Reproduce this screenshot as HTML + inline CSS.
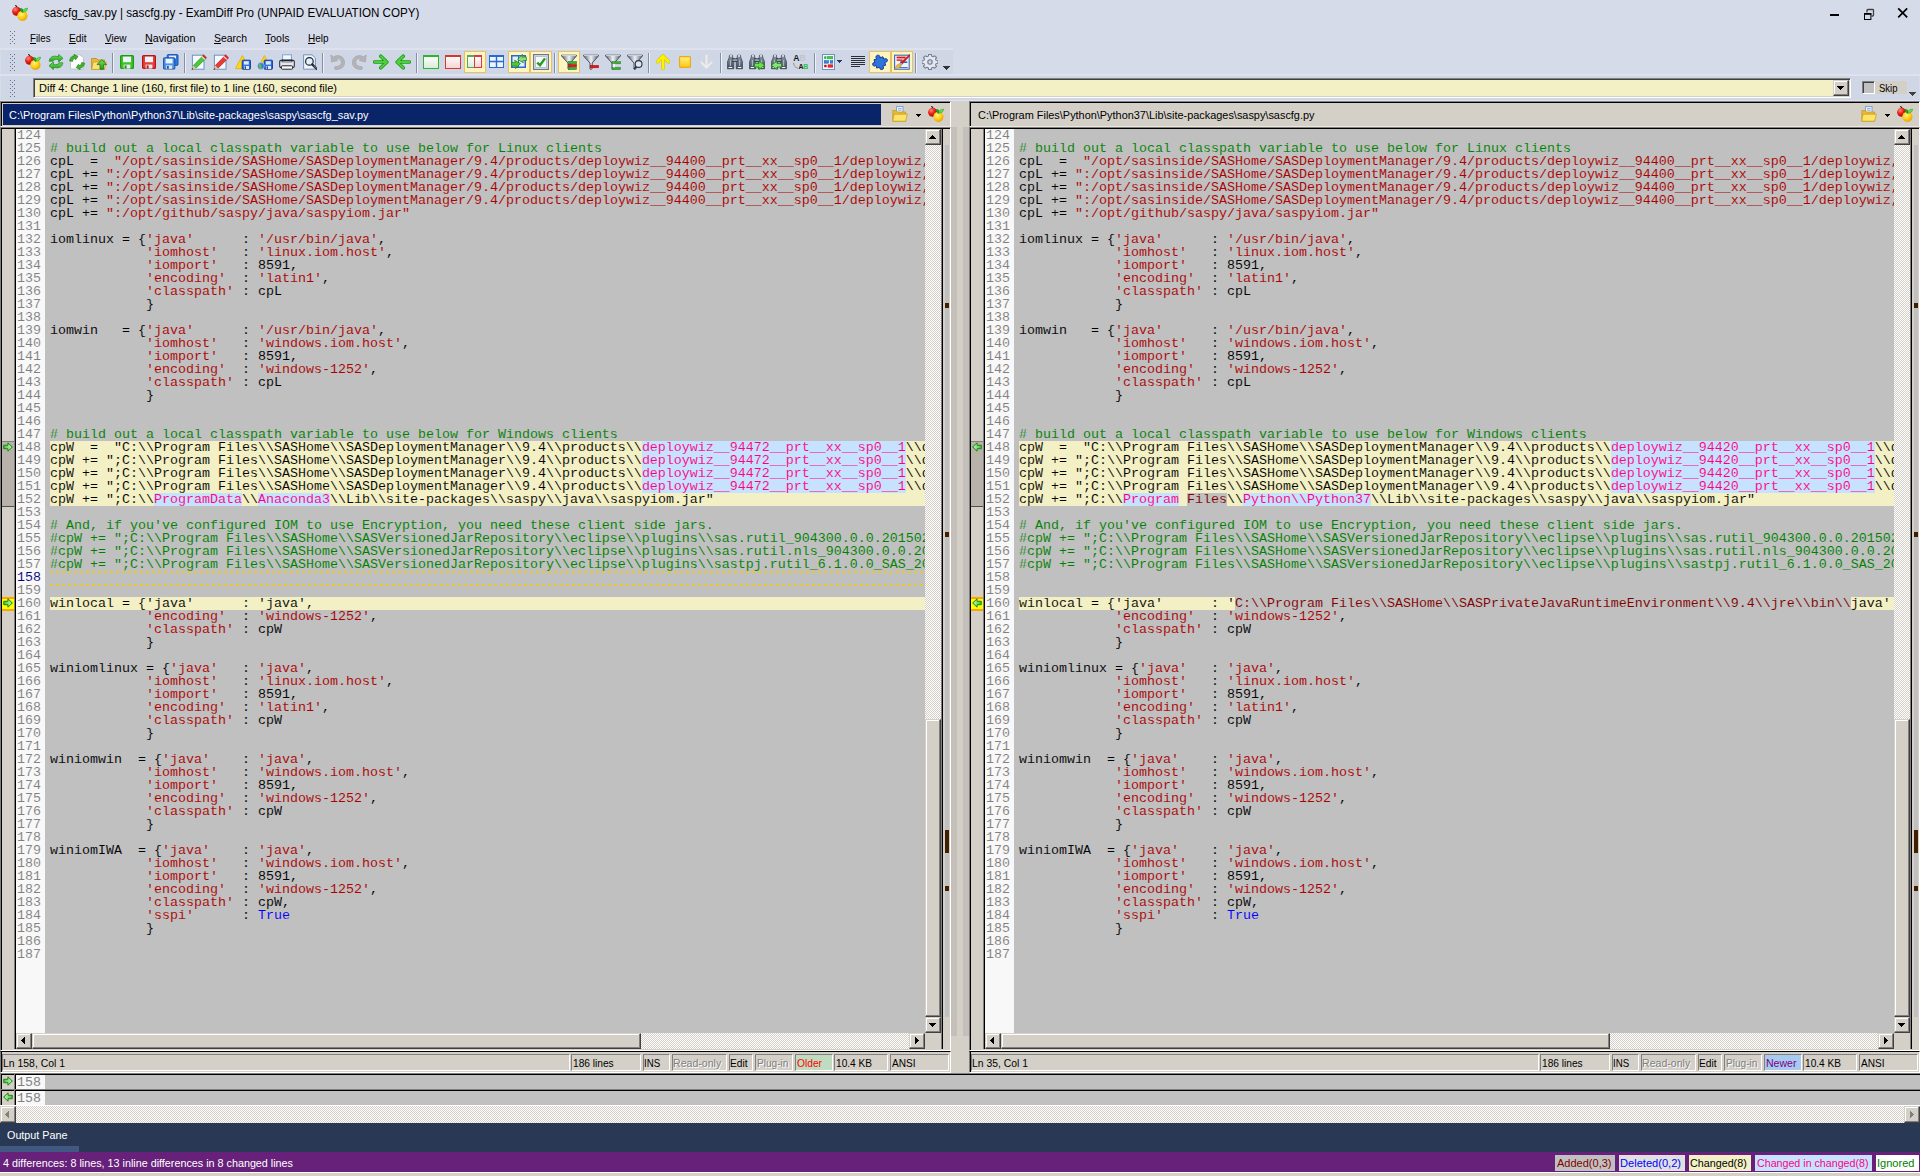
<!DOCTYPE html><html><head><meta charset="utf-8"><title>ExamDiff Pro</title><style>
*{box-sizing:border-box;margin:0;padding:0}
html,body{width:1920px;height:1176px;overflow:hidden;background:#d6dbe9}
body{position:relative;font-family:"Liberation Sans",sans-serif;font-size:11px;color:#000}
.a{position:absolute}
.ui{font-family:"Liberation Sans",sans-serif;font-size:11.5px;white-space:pre;line-height:14px;letter-spacing:-0.15px}
.mono{font-family:"Liberation Mono",monospace;font-size:13.33px;line-height:13px;white-space:pre;-webkit-text-stroke:0.08px #c0c0c0}
.ch{-webkit-text-stroke-color:#f2efc4}.c{-webkit-text-stroke-color:#c6e2ff}.ad{-webkit-text-stroke-color:#c0c0c0}.ln{-webkit-text-stroke-color:#f8f8f8}
.k{background:#000}
.face{background:#d4d0c8}
.btn{background:#d4d0c8;border:1px solid;border-color:#d4d0c8 #404040 #404040 #d4d0c8;box-shadow:inset -1px -1px 0 #808080, inset 1px 1px 0 #fff}
.chk{background-color:#e9e7e3;background-image:conic-gradient(#fff 25%,#d4d0c8 0 50%,#fff 0 75%,#d4d0c8 0);background-size:2px 2px}
.sunk{border:1px solid;border-color:#808080 #fff #fff #808080}
.cell{position:absolute;top:1054px;height:17px;border:1px solid;border-color:#808080 #fff #fff #808080;padding-left:1px;line-height:13px}
.ln{position:absolute;left:0;width:29px;height:13px;color:#808080;letter-spacing:0}
.row{position:absolute;left:0;height:13px;width:2000px}
.cm{color:#008000}.st{color:#aa0000}.kw{color:#0000ff}
.c,.ad{display:inline-block;height:13px;line-height:13px;vertical-align:top}
.c{color:#ff0080;background:#c6e2ff}
.ad{color:#800000;background:#c0c0c0}
.ch{background:#f3f0c5}
u{text-decoration:underline;text-underline-offset:1px}
.sep{position:absolute;top:53px;width:1px;height:20px;background:#8591a2;box-shadow:1px 0 0 #eef1f7}
.hl{position:absolute;top:51px;width:22px;height:22px;background:#fdf4bf;border:1px solid #e5c365}
.grip{position:absolute;width:5px;background-image:radial-gradient(#8c96a8 0.8px,transparent 1px);background-size:4px 4px}
</style></head><body>
<svg width="0" height="0" style="position:absolute"><defs><radialGradient id="gr" cx="35%" cy="30%" r="75%"><stop offset="0" stop-color="#ff8a70"/><stop offset=".5" stop-color="#e8201a"/><stop offset="1" stop-color="#a00808"/></radialGradient><radialGradient id="gy" cx="40%" cy="35%" r="70%"><stop offset="0" stop-color="#fff08a"/><stop offset=".5" stop-color="#ffd21a"/><stop offset="1" stop-color="#e89a00"/></radialGradient><linearGradient id="gg" x1="0" y1="0" x2="0" y2="1"><stop offset="0" stop-color="#7adf5a"/><stop offset="1" stop-color="#1e9e1e"/></linearGradient><linearGradient id="gfn" x1="0" y1="0" x2="1" y2="0"><stop offset="0" stop-color="#5a6473"/><stop offset=".5" stop-color="#eef1f5"/><stop offset="1" stop-color="#5a6473"/></linearGradient><linearGradient id="gw" x1="0" y1="0" x2="0" y2="1"><stop offset="0" stop-color="#ffffff"/><stop offset="1" stop-color="#d8ecd8"/></linearGradient><linearGradient id="gwr" x1="0" y1="0" x2="0" y2="1"><stop offset="0" stop-color="#ffffff"/><stop offset="1" stop-color="#f6d2d2"/></linearGradient><linearGradient id="gb" x1="0" y1="0" x2="0" y2="1"><stop offset="0" stop-color="#8f9db0"/><stop offset="1" stop-color="#3d4756"/></linearGradient><linearGradient id="gyl" x1="0" y1="0" x2="0" y2="1"><stop offset="0" stop-color="#fff27a"/><stop offset="1" stop-color="#fbc814"/></linearGradient><linearGradient id="gar" x1="0" y1="0" x2="1" y2="0"><stop offset="0" stop-color="#3cc02c"/><stop offset=".75" stop-color="#a8eea0"/><stop offset="1" stop-color="#58d048"/></linearGradient><linearGradient id="gal" x1="1" y1="0" x2="0" y2="0"><stop offset="0" stop-color="#3cc02c"/><stop offset=".75" stop-color="#a8eea0"/><stop offset="1" stop-color="#58d048"/></linearGradient></defs></svg>
<div class="a" style="left:12px;top:5px;line-height:0"><svg width="16" height="16" viewBox="0 0 16 16"><path d="M3.2 0.5 C4.2 0.6 4.8 1.4 5.3 2.6" stroke="#201000" stroke-width="1.1" fill="none"/><circle cx="4.6" cy="6.2" r="4.5" fill="url(#gr)"/><circle cx="10.4" cy="10.8" r="5.1" fill="url(#gy)"/><path d="M8.2 3.6 C9.6 3 10.8 3.8 11.2 5.2 C11.4 6.2 11 7 10.6 7.4 C9 7 8 5.6 8.2 3.6 Z" fill="#25a81f" stroke="#157a12" stroke-width=".5"/><path d="M10.8 7.2 C10.6 5 12.4 3.2 15.6 3.2 C15.4 5.6 13.6 7.2 10.8 7.2 Z" fill="#62e044" stroke="#1f9a18" stroke-width=".5"/></svg></div>
<div class="a ui" style="left:43.8px;top:6px;font-size:12px;letter-spacing:0;color:#000;transform:scaleX(0.9689);transform-origin:0 0;">sascfg_sav.py | sascfg.py - ExamDiff Pro (UNPAID EVALUATION COPY)</div>
<div class="a " style="left:1830px;top:14px;width:9px;height:2px;background:#000"></div>
<svg class="a" style="left:1863px;top:8px" width="12" height="13" viewBox="0 0 12 13"><path d="M4 4.5 L4 2.2 Q4 1.5 4.8 1.5 L9.7 1.5 Q10.5 1.5 10.5 2.3 L10.5 7.2 Q10.5 8 9.7 8 L8.5 8" fill="none" stroke="#404040" stroke-width="1.3"/><rect x="1.5" y="6" width="6.4" height="5.5" fill="none" stroke="#000" stroke-width="1"/><rect x="1" y="5" width="7.4" height="1.6" fill="#000"/></svg>
<svg class="a" style="left:1897px;top:7px" width="12" height="12" viewBox="0 0 12 12"><path d="M1.2 1.4 L10.2 10.4 M10.2 1.4 L1.2 10.4" stroke="#000" stroke-width="1.7"/></svg>
<svg class="a" style="left:10px;top:31px" width="5" height="14" fill="#5f6f8c" shape-rendering="crispEdges"><rect x="0" y="0" width="1" height="1"/><rect x="4" y="0" width="1" height="1"/><rect x="2" y="2" width="1" height="1"/><rect x="0" y="4" width="1" height="1"/><rect x="4" y="4" width="1" height="1"/><rect x="2" y="6" width="1" height="1"/><rect x="0" y="8" width="1" height="1"/><rect x="4" y="8" width="1" height="1"/><rect x="2" y="10" width="1" height="1"/><rect x="0" y="12" width="1" height="1"/><rect x="4" y="12" width="1" height="1"/></svg>
<div class="a ui" style="left:30px;top:31px;font-size:11px;letter-spacing:0;color:#000;transform:scaleX(0.8827);transform-origin:0 0;"><u>F</u>iles</div>
<div class="a ui" style="left:69px;top:31px;font-size:11px;letter-spacing:0;color:#000;transform:scaleX(0.9232);transform-origin:0 0;"><u>E</u>dit</div>
<div class="a ui" style="left:105px;top:31px;font-size:11px;letter-spacing:0;color:#000;transform:scaleX(0.9093);transform-origin:0 0;"><u>V</u>iew</div>
<div class="a ui" style="left:145px;top:31px;font-size:11px;letter-spacing:0;color:#000;transform:scaleX(0.9716);transform-origin:0 0;"><u>N</u>avigation</div>
<div class="a ui" style="left:214px;top:31px;font-size:11px;letter-spacing:0;color:#000;transform:scaleX(0.9468);transform-origin:0 0;"><u>S</u>earch</div>
<div class="a ui" style="left:265px;top:31px;font-size:11px;letter-spacing:0;color:#000;transform:scaleX(0.9541);transform-origin:0 0;"><u>T</u>ools</div>
<div class="a ui" style="left:308px;top:31px;font-size:11px;letter-spacing:0;color:#000;transform:scaleX(0.9061);transform-origin:0 0;"><u>H</u>elp</div>
<div class="a " style="left:1px;top:50px;width:952px;height:24px;background:#cfd6e5"></div>
<div class="a " style="left:0px;top:48px;width:953px;height:2px;background:#dde2ee"></div>
<div class="a " style="left:0px;top:74px;width:1920px;height:2px;background:#dde2ee"></div>
<div class="a " style="left:0px;top:100px;width:1920px;height:1px;background:#dde2ee"></div>
<svg class="a" style="left:10px;top:54px" width="5" height="18" fill="#5f6f8c" shape-rendering="crispEdges"><rect x="0" y="0" width="1" height="1"/><rect x="4" y="0" width="1" height="1"/><rect x="2" y="2" width="1" height="1"/><rect x="0" y="4" width="1" height="1"/><rect x="4" y="4" width="1" height="1"/><rect x="2" y="6" width="1" height="1"/><rect x="0" y="8" width="1" height="1"/><rect x="4" y="8" width="1" height="1"/><rect x="2" y="10" width="1" height="1"/><rect x="0" y="12" width="1" height="1"/><rect x="4" y="12" width="1" height="1"/><rect x="2" y="14" width="1" height="1"/><rect x="0" y="16" width="1" height="1"/><rect x="4" y="16" width="1" height="1"/></svg>
<div class="hl" style="left:464px"></div>
<div class="hl" style="left:508px"></div>
<div class="hl" style="left:530px"></div>
<div class="hl" style="left:558px"></div>
<div class="hl" style="left:869px"></div>
<div class="hl" style="left:891px"></div>
<div class="sep" style="left:112px"></div>
<div class="sep" style="left:184px"></div>
<div class="sep" style="left:322px"></div>
<div class="sep" style="left:416px"></div>
<div class="sep" style="left:554px"></div>
<div class="sep" style="left:648px"></div>
<div class="sep" style="left:720px"></div>
<div class="sep" style="left:814px"></div>
<div class="sep" style="left:915px"></div>
<div class="a" style="left:25px;top:54px;line-height:0"><svg width="16" height="16" viewBox="0 0 16 16"><path d="M3.2 0.5 C4.2 0.6 4.8 1.4 5.3 2.6" stroke="#201000" stroke-width="1.1" fill="none"/><circle cx="4.6" cy="6.2" r="4.5" fill="url(#gr)"/><circle cx="10.4" cy="10.8" r="5.1" fill="url(#gy)"/><path d="M8.2 3.6 C9.6 3 10.8 3.8 11.2 5.2 C11.4 6.2 11 7 10.6 7.4 C9 7 8 5.6 8.2 3.6 Z" fill="#25a81f" stroke="#157a12" stroke-width=".5"/><path d="M10.8 7.2 C10.6 5 12.4 3.2 15.6 3.2 C15.4 5.6 13.6 7.2 10.8 7.2 Z" fill="#62e044" stroke="#1f9a18" stroke-width=".5"/></svg></div>
<div class="a" style="left:48px;top:54px;line-height:0"><svg width="16" height="16" viewBox="0 0 16 16"><path d="M1.2 7.2 C1.5 3.2 5 1.6 8.4 2.3 L10.6 2.6 L10.6 0.4 L15 4.3 L10.6 8 L10.6 5.6 C7.6 5 5.4 5.6 5 7.2 Z" fill="url(#gg)" stroke="#1a8a1a" stroke-width=".7"/><path d="M14.8 8.8 C14.5 12.8 11 14.4 7.6 13.7 L5.4 13.4 L5.4 15.6 L1 11.7 L5.4 8 L5.4 10.4 C8.4 11 10.6 10.4 11 8.8 Z" fill="url(#gg)" stroke="#1a8a1a" stroke-width=".7"/></svg></div>
<div class="a" style="left:69px;top:54px;line-height:0"><svg width="16" height="16" viewBox="0 0 16 16"><path d="M1.5 2.5 L10.5 0.8 L14.5 3.6 L14.5 15 L1.5 15 Z" fill="#fdfdfd" stroke="#b8bcc4" stroke-width=".8"/><path d="M0.6 7 C0.8 3.8 3 2 5.6 1.6 L5 0.2 L9 2.6 L6.6 5.8 L6.2 4.2 C4.6 4.6 3.6 5.6 3.6 7.4 Z" fill="#3fb52a" stroke="#1a7a1a" stroke-width=".6"/><path d="M15.6 9 C15.4 12.2 13.2 14 10.6 14.4 L11.2 15.8 L7.2 13.4 L9.6 10.2 L10 11.8 C11.6 11.4 12.6 10.4 12.6 8.6 Z" fill="#3fb52a" stroke="#1a7a1a" stroke-width=".6"/></svg></div>
<div class="a" style="left:91px;top:54px;line-height:0"><svg width="16" height="16" viewBox="0 0 16 16"><path d="M0.6 4.5 L5.5 4.5 L6.8 6 L13.5 6 L13.5 15.4 L0.6 15.4 Z" fill="#e9b93a" stroke="#b98a14" stroke-width=".8"/><path d="M2.2 8 L15.4 8 L13.4 15.4 L0.6 15.4 Z" fill="#fbe07a" stroke="#c79a1c" stroke-width=".7"/><path d="M10.8 5.6 L15.6 10.6 L12.6 10.6 L12.6 15.2 L9 15.2 L9 10.6 L6 10.6 Z" fill="url(#gg)" stroke="#1a7a1a" stroke-width=".8"/></svg></div>
<div class="a" style="left:120px;top:55px;line-height:0"><svg width="14" height="14" viewBox="0 0 14 14"><rect x=".6" y=".6" width="12.8" height="12.8" rx="1" fill="#3ec32a" stroke="#1f9a14" stroke-width="1.2"/><rect x="3" y="1.6" width="8" height="5.6" fill="#eef4fb"/><rect x="3.6" y="9.6" width="6.8" height="4" fill="#e8e8ee"/><rect x="4.6" y="10.4" width="2" height="3.2" fill="#1f9a14"/></svg></div>
<div class="a" style="left:142px;top:55px;line-height:0"><svg width="14" height="14" viewBox="0 0 14 14"><rect x=".6" y=".6" width="12.8" height="12.8" rx="1" fill="#e3403c" stroke="#b81414" stroke-width="1.2"/><rect x="3" y="1.6" width="8" height="5.6" fill="#eef4fb"/><rect x="3.6" y="9.6" width="6.8" height="4" fill="#e8e8ee"/><rect x="4.6" y="10.4" width="2" height="3.2" fill="#c81414"/></svg></div>
<div class="a" style="left:163px;top:54px;line-height:0"><svg width="16" height="16" viewBox="0 0 16 16"><rect x="4.2" y=".6" width="10.8" height="10.8" rx="1" fill="#2f78d6" stroke="#1b57b0" stroke-width="1"/><rect x="6" y="1.6" width="7" height="3" fill="#e6f0fb"/><rect x=".6" y="3.8" width="11.2" height="11.2" rx="1" fill="#4a93ea" stroke="#1b57b0" stroke-width="1.1"/><rect x="2.6" y="4.8" width="7" height="4.6" fill="#eef4fb"/><rect x="3.2" y="11.4" width="6" height="3.4" fill="#e8e8ee"/><rect x="4" y="12" width="1.8" height="2.8" fill="#1b57b0"/></svg></div>
<div class="a" style="left:191px;top:54px;line-height:0"><svg width="16" height="16" viewBox="0 0 16 16"><rect x="1.4" y="1.2" width="11.6" height="14" fill="#f7fafe" stroke="#6f92c4" stroke-width="1"/><path d="M12.4 1.2 L15.4 4 L5 14.2 L2.2 11.6 Z" fill="#4ac83a" stroke="#1f8a14" stroke-width=".6"/><path d="M12.6 0.4 L15.8 3.4 L14.4 4.8 L11.2 1.8 Z" fill="#e82222"/><path d="M11 2 L14.2 5 L13.4 5.8 L10.2 2.8 Z" fill="#e8e8e8"/><path d="M2.2 11.6 L5 14.2 L0.6 15.8 Z" fill="#e8c08a"/><path d="M0.5 15.9 L1.3 13.9 L2.4 15.1 Z" fill="#222"/></svg></div>
<div class="a" style="left:213px;top:54px;line-height:0"><svg width="16" height="16" viewBox="0 0 16 16"><rect x="1.4" y="1.2" width="11.6" height="14" fill="#f7fafe" stroke="#6f92c4" stroke-width="1"/><path d="M12.4 1.2 L15.4 4 L5 14.2 L2.2 11.6 Z" fill="#ea3a34" stroke="#a81010" stroke-width=".6"/><path d="M12.6 0.4 L15.8 3.4 L14.4 4.8 L11.2 1.8 Z" fill="#e82222"/><path d="M11 2 L14.2 5 L13.4 5.8 L10.2 2.8 Z" fill="#e8e8e8"/><path d="M2.2 11.6 L5 14.2 L0.6 15.8 Z" fill="#e8c08a"/><path d="M0.5 15.9 L1.3 13.9 L2.4 15.1 Z" fill="#222"/></svg></div>
<div class="a" style="left:235px;top:54px;line-height:0"><svg width="16" height="16" viewBox="0 0 16 16"><path d="M7.4 1.6 L14.6 14.6 L0.4 14.6 Z" fill="#fbd728" stroke="#e0b000" stroke-width=".8"/><rect x="7.2" y="6.2" width="8.2" height="9" rx=".6" fill="#2f6fe0" stroke="#103c9a" stroke-width="1"/><rect x="8.8" y="7.2" width="5" height="3.4" fill="#d8e8fa"/><rect x="9" y="12" width="5" height="3" fill="#e8e8ee"/><rect x="9.6" y="12.4" width="1.4" height="2.4" fill="#103c9a"/></svg></div>
<div class="a" style="left:257px;top:54px;line-height:0"><svg width="16" height="16" viewBox="0 0 16 16"><path d="M7.4 1.6 L13.6 13.6 L1.4 13.6 Z" fill="#fbd728" stroke="#e0b000" stroke-width=".8"/><rect x="7.2" y="6.2" width="8.2" height="9" rx=".6" fill="#2f6fe0" stroke="#103c9a" stroke-width="1"/><rect x="8.8" y="7.2" width="5" height="3.4" fill="#d8e8fa"/><rect x="9" y="12" width="5" height="3" fill="#e8e8ee"/><rect x="9.6" y="12.4" width="1.4" height="2.4" fill="#103c9a"/><circle cx="4" cy="12" r="3.4" fill="#3a78d8" stroke="#c8d4e8" stroke-width=".6"/><path d="M2 10.4 C3.4 9.6 5 10.6 4.2 12 C3.6 13 5.6 13.4 4.8 14.8 C3 14.8 1.6 13 2 10.4Z" fill="#5ac83a"/></svg></div>
<div class="a" style="left:279px;top:54px;line-height:0"><svg width="16" height="16" viewBox="0 0 16 16"><rect x="3.6" y=".8" width="8.8" height="6" fill="#f2f7fd" stroke="#7a9ccc" stroke-width=".9"/><rect x=".7" y="6.4" width="14.6" height="7" rx="1.2" fill="#e4e8ef" stroke="#2a3240" stroke-width="1.1"/><rect x="2.6" y="5.6" width="10.8" height="2.6" fill="#20242c"/><rect x="3.4" y="7" width="9.2" height="1.4" fill="#9aa0aa"/><rect x="2.4" y="11.8" width="11.2" height="3.4" rx=".8" fill="#fdfdfd" stroke="#20242c" stroke-width="1"/></svg></div>
<div class="a" style="left:302px;top:54px;line-height:0"><svg width="15" height="16" viewBox="0 0 15 16"><path d="M1.6 .8 L10 .8 L13.4 4 L13.4 15.2 L1.6 15.2 Z" fill="#eef4fb" stroke="#6f92c4" stroke-width="1"/><circle cx="7.4" cy="7.4" r="3.8" fill="#e2eefb" fill-opacity=".8" stroke="#20242c" stroke-width="1.2"/><path d="M10.2 10.4 L14.8 15" stroke="#20242c" stroke-width="2.2" stroke-linecap="round"/><path d="M11.4 11.6 L14.4 14.6" stroke="#8a94a4" stroke-width=".8"/></svg></div>
<div class="a" style="left:330px;top:54px;line-height:0"><svg width="16" height="16" viewBox="0 0 16 16"><path d="M0.8 1 L1.6 8 L8 6.4 L5.8 4.8 C8.4 3.6 11.4 5.4 11.2 8.6 C11 11.4 8.6 12.6 5.6 12.6 C4 12.6 4 15.4 5.8 15.4 C10.8 15.6 14.6 13 14.6 8.4 C14.6 2.8 8.4 -0.4 3.6 3 Z" fill="#b4b4b6" stroke="#a2a2a6" stroke-width=".6"/></svg></div>
<div class="a" style="left:351px;top:54px;line-height:0"><svg width="16" height="16" viewBox="0 0 16 16"><path d="M15.2 1 L14.4 8 L8 6.4 L10.2 4.8 C7.6 3.6 4.6 5.4 4.8 8.6 C5 11.4 7.4 12.6 10.4 12.6 C12 12.6 12 15.4 10.2 15.4 C5.2 15.6 1.4 13 1.4 8.4 C1.4 2.8 7.6 -0.4 12.4 3 Z" fill="#b4b4b6" stroke="#a2a2a6" stroke-width=".6"/></svg></div>
<div class="a" style="left:373px;top:54px;line-height:0"><svg width="16" height="16" viewBox="0 0 16 16"><path d="M1.6 8 L13.6 8 M7.8 2.2 L13.8 8 L7.8 13.8" fill="none" stroke="#1a9a14" stroke-width="3.6" stroke-linecap="round" stroke-linejoin="round"/><path d="M1.6 8 L13.6 8 M7.8 2.2 L13.8 8 L7.8 13.8" fill="none" stroke="#4ed03c" stroke-width="2" stroke-linecap="round" stroke-linejoin="round"/></svg></div>
<div class="a" style="left:395px;top:54px;line-height:0"><svg width="16" height="16" viewBox="0 0 16 16"><path d="M14.4 8 L2.4 8 M8.2 2.2 L2.2 8 L8.2 13.8" fill="none" stroke="#1a9a14" stroke-width="3.6" stroke-linecap="round" stroke-linejoin="round"/><path d="M14.4 8 L2.4 8 M8.2 2.2 L2.2 8 L8.2 13.8" fill="none" stroke="#4ed03c" stroke-width="2" stroke-linecap="round" stroke-linejoin="round"/></svg></div>
<div class="a" style="left:423px;top:55px;line-height:0"><svg width="16" height="14" viewBox="0 0 16 14"><rect x=".5" y=".5" width="15" height="13" fill="url(#gw)" stroke="#2fb52a" stroke-width="1"/><rect x="1" y="1" width="14" height="1" fill="#2fb52a"/></svg></div>
<div class="a" style="left:445px;top:55px;line-height:0"><svg width="16" height="14" viewBox="0 0 16 14"><rect x=".5" y=".5" width="15" height="13" fill="url(#gwr)" stroke="#d23a2a" stroke-width="1"/><rect x="1" y="1" width="14" height="1" fill="#d23a2a"/></svg></div>
<div class="a" style="left:467px;top:55px;line-height:0"><svg width="15" height="13" viewBox="0 0 15 13"><rect x=".5" y=".5" width="7.5" height="12" fill="url(#gw)" stroke="#58a858" stroke-width="1"/><rect x="7.5" y=".5" width="7" height="12" fill="url(#gwr)" stroke="#d63a4a" stroke-width="1"/><rect x="1" y="1" width="6.5" height="1" fill="#58a858"/><rect x="8" y="1" width="6" height="1" fill="#d63a4a"/></svg></div>
<div class="a" style="left:489px;top:55px;line-height:0"><svg width="15" height="13" viewBox="0 0 15 13"><rect x=".5" y=".5" width="14" height="12" fill="#eef4fc" stroke="#2a6ad0" stroke-width="1"/><rect x="1" y="1" width="13" height="1" fill="#2a6ad0"/><path d="M7.5 1 L7.5 12 M1 6.5 L14 6.5" stroke="#2a6ad0" stroke-width="1.4"/></svg></div>
<div class="a" style="left:511px;top:54px;line-height:0"><svg width="16" height="16" viewBox="0 0 16 16"><rect x=".75" y="1.75" width="13.5" height="11.5" fill="#e6effb" stroke="#2a6ad0" stroke-width="1.5"/><path d="M7.5 2 L7.5 13" stroke="#2a6ad0" stroke-width="1"/><path d="M0.4 8.6 L4.4 8.2 L3.6 6.2 L9.4 9.6 L4.6 14.6 L5.2 11.8 L0.8 12.2 Z" fill="#4ac83a" stroke="#1a7a14" stroke-width=".7"/><path d="M15.6 6.4 L11.6 6.8 L12.4 8.8 L6.6 5.4 L11.4 0.4 L10.8 3.2 L15.2 2.8 Z" fill="#8ae07a" stroke="#1a7a14" stroke-width=".7"/></svg></div>
<div class="a" style="left:533px;top:54px;line-height:0"><svg width="16" height="16" viewBox="0 0 16 16"><rect x=".6" y=".6" width="14.8" height="14.8" fill="#e4e8f0" stroke="#6a7890" stroke-width="1.2"/><rect x="2.6" y="2.6" width="10.8" height="10.8" fill="#f8f8fa" stroke="#aab2c2" stroke-width=".8"/><path d="M4.2 8.6 L7 11.2 L12 4.4" fill="none" stroke="#1e9e1e" stroke-width="2.4"/></svg></div>
<div class="a" style="left:561px;top:54px;line-height:0"><svg width="16" height="16" viewBox="0 0 16 16"><path d="M0.6 1.2 L15.4 1.2 L15.4 2 L9.2 9 L9.2 14.6 L7.8 15.6 L7 15 L7 9 L0.6 2 Z" fill="url(#gfn)" stroke="#3a4250" stroke-width=".9"/><path d="M1 1.6 L15 1.6" stroke="#f4f6f9" stroke-width=".8"/><rect x="7.6" y="7.4" width="8" height="2.4" fill="#3fae34" stroke="#1f7f1a" stroke-width=".5"/><rect x="7.6" y="10.4" width="8" height="2.4" fill="#e01818" stroke="#9a0a0a" stroke-width=".5"/><rect x="7.6" y="13.4" width="8" height="2.2" fill="#3fae34" stroke="#1f7f1a" stroke-width=".5"/></svg></div>
<div class="a" style="left:583px;top:54px;line-height:0"><svg width="16" height="16" viewBox="0 0 16 16"><path d="M0.6 1.2 L15.4 1.2 L15.4 2 L9.2 9 L9.2 14.6 L7.8 15.6 L7 15 L7 9 L0.6 2 Z" fill="url(#gfn)" stroke="#3a4250" stroke-width=".9"/><path d="M1 1.6 L15 1.6" stroke="#f4f6f9" stroke-width=".8"/><rect x="7.4" y="11.4" width="8.2" height="2.4" fill="#e01818" stroke="#9a0a0a" stroke-width=".5"/></svg></div>
<div class="a" style="left:605px;top:54px;line-height:0"><svg width="16" height="16" viewBox="0 0 16 16"><path d="M0.6 1.2 L15.4 1.2 L15.4 2 L9.2 9 L9.2 14.6 L7.8 15.6 L7 15 L7 9 L0.6 2 Z" fill="url(#gfn)" stroke="#3a4250" stroke-width=".9"/><path d="M1 1.6 L15 1.6" stroke="#f4f6f9" stroke-width=".8"/><rect x="7" y="7.6" width="8.6" height="2.2" fill="#3fae34" stroke="#1f7f1a" stroke-width=".5"/><rect x="7" y="13.4" width="8.6" height="2.2" fill="#3fae34" stroke="#1f7f1a" stroke-width=".5"/><rect x="8" y="9.8" width="2" height="3.6" fill="#eef1f5"/></svg></div>
<div class="a" style="left:627px;top:54px;line-height:0"><svg width="16" height="16" viewBox="0 0 16 16"><path d="M0.6 1.2 L15.4 1.2 L15.4 2 L9.2 9 L9.2 14.6 L7.8 15.6 L7 15 L7 9 L0.6 2 Z" fill="url(#gfn)" stroke="#3a4250" stroke-width=".9"/><path d="M1 1.6 L15 1.6" stroke="#f4f6f9" stroke-width=".8"/><circle cx="11.6" cy="10" r="3.4" fill="#dce8f8" stroke="#2a3240" stroke-width="1.1"/><path d="M9.2 12.6 L7 15" stroke="#2a3240" stroke-width="1.6"/></svg></div>
<div class="a" style="left:656px;top:54px;line-height:0"><svg width="14" height="16" viewBox="0 0 14 16"><path d="M7 14.6 L7 2.2 M1.6 7.8 L7 2 L12.4 7.8" fill="none" stroke="#d8cc00" stroke-width="3.6" stroke-linecap="round" stroke-linejoin="round"/><path d="M7 14.6 L7 2.2 M1.6 7.8 L7 2 L12.4 7.8" fill="none" stroke="#fff200" stroke-width="2.2" stroke-linecap="round" stroke-linejoin="round"/></svg></div>
<div class="a" style="left:679px;top:56px;line-height:0"><svg width="12" height="12" viewBox="0 0 12 12"><rect x=".6" y=".6" width="10.8" height="10.8" rx=".8" fill="url(#gyl)" stroke="#f0a81a" stroke-width="1.2"/></svg></div>
<div class="a" style="left:700px;top:54px;line-height:0"><svg width="13" height="16" viewBox="0 0 13 16"><path d="M6.5 1.6 L6.5 13.6 M1.4 8.4 L6.5 13.8 L11.6 8.4" fill="none" stroke="#d4d6da" stroke-width="3.4" stroke-linecap="round" stroke-linejoin="round"/><path d="M6.5 1.6 L6.5 13.6 M1.4 8.4 L6.5 13.8 L11.6 8.4" fill="none" stroke="#ececee" stroke-width="2" stroke-linecap="round" stroke-linejoin="round"/></svg></div>
<div class="a" style="left:727px;top:54px;line-height:0"><svg width="16" height="16" viewBox="0 0 16 16"><path d="M2.6 1.2 L5.4 1.2 L5.8 3.4 L6.8 5 L6.8 14.8 L0.4 14.8 L0.4 8 L2 4 Z" fill="url(#gb)" stroke="#2a3240" stroke-width=".6"/><path d="M13.4 1.2 L10.6 1.2 L10.2 3.4 L9.2 5 L9.2 14.8 L15.6 14.8 L15.6 8 L14 4 Z" fill="url(#gb)" stroke="#2a3240" stroke-width=".6"/><rect x="5.4" y="4.6" width="5.2" height="3.2" fill="#4a5464" stroke="#2a3240" stroke-width=".5"/><rect x="5.6" y="5.6" width="4.8" height=".9" fill="#e4e8ee"/><rect x="3" y="1.2" width="2" height="1.4" fill="#eef1f5"/><rect x="11" y="1.2" width="2" height="1.4" fill="#eef1f5"/><rect x="1.6" y="13" width="3.6" height="1" fill="#f4f6f9"/><rect x="10.8" y="13" width="3.6" height="1" fill="#f4f6f9"/><path d="M3.4 6 L3.4 12 M12.6 6 L12.6 12" stroke="#aab4c4" stroke-width="1.2"/></svg></div>
<div class="a" style="left:749px;top:54px;line-height:0"><svg width="16" height="16" viewBox="0 0 16 16"><path d="M2.6 1.2 L5.4 1.2 L5.8 3.4 L6.8 5 L6.8 14.8 L0.4 14.8 L0.4 8 L2 4 Z" fill="url(#gb)" stroke="#2a3240" stroke-width=".6"/><path d="M13.4 1.2 L10.6 1.2 L10.2 3.4 L9.2 5 L9.2 14.8 L15.6 14.8 L15.6 8 L14 4 Z" fill="url(#gb)" stroke="#2a3240" stroke-width=".6"/><rect x="5.4" y="4.6" width="5.2" height="3.2" fill="#4a5464" stroke="#2a3240" stroke-width=".5"/><rect x="5.6" y="5.6" width="4.8" height=".9" fill="#e4e8ee"/><rect x="3" y="1.2" width="2" height="1.4" fill="#eef1f5"/><rect x="11" y="1.2" width="2" height="1.4" fill="#eef1f5"/><rect x="1.6" y="13" width="3.6" height="1" fill="#f4f6f9"/><rect x="10.8" y="13" width="3.6" height="1" fill="#f4f6f9"/><path d="M3.4 6 L3.4 12 M12.6 6 L12.6 12" stroke="#aab4c4" stroke-width="1.2"/><path d="M5.4 9.4 L10 9.4 L10 7 L15.6 11.2 L10 15.6 L10 13 L5.4 13 Z" fill="#6ae04a" stroke="#1a8a14" stroke-width=".8"/></svg></div>
<div class="a" style="left:771px;top:54px;line-height:0"><svg width="16" height="16" viewBox="0 0 16 16"><path d="M2.6 1.2 L5.4 1.2 L5.8 3.4 L6.8 5 L6.8 14.8 L0.4 14.8 L0.4 8 L2 4 Z" fill="url(#gb)" stroke="#2a3240" stroke-width=".6"/><path d="M13.4 1.2 L10.6 1.2 L10.2 3.4 L9.2 5 L9.2 14.8 L15.6 14.8 L15.6 8 L14 4 Z" fill="url(#gb)" stroke="#2a3240" stroke-width=".6"/><rect x="5.4" y="4.6" width="5.2" height="3.2" fill="#4a5464" stroke="#2a3240" stroke-width=".5"/><rect x="5.6" y="5.6" width="4.8" height=".9" fill="#e4e8ee"/><rect x="3" y="1.2" width="2" height="1.4" fill="#eef1f5"/><rect x="11" y="1.2" width="2" height="1.4" fill="#eef1f5"/><rect x="1.6" y="13" width="3.6" height="1" fill="#f4f6f9"/><rect x="10.8" y="13" width="3.6" height="1" fill="#f4f6f9"/><path d="M3.4 6 L3.4 12 M12.6 6 L12.6 12" stroke="#aab4c4" stroke-width="1.2"/><path d="M10.6 9.4 L6 9.4 L6 7 L0.4 11.2 L6 15.6 L6 13 L10.6 13 Z" fill="#8ae07a" stroke="#1a8a14" stroke-width=".8"/></svg></div>
<div class="a" style="left:793px;top:54px;line-height:0"><svg width="15" height="16" viewBox="0 0 15 16"><text x=".2" y="7.2" font-family="Liberation Sans" font-size="8.6" font-weight="bold" fill="#1a1a1a">A</text><text x="6.6" y="7.2" font-family="Liberation Sans" font-size="8.6" font-weight="bold" fill="#c4c4c8">B</text><text x="5.6" y="14.6" font-family="Liberation Sans" font-size="7" font-weight="bold" fill="#1a1a1a">A</text><text x="10.2" y="14.6" font-family="Liberation Sans" font-size="7" font-weight="bold" fill="#2cc03c">B</text><path d="M0.4 8.8 C0.8 11.8 2.6 13.8 5 14.2" fill="none" stroke="#808080" stroke-width=".8"/></svg></div>
<div class="a" style="left:822px;top:54px;line-height:0"><svg width="13" height="16" viewBox="0 0 13 16"><rect x=".5" y=".5" width="12" height="15" fill="#f4f8fd" stroke="#6f92c4" stroke-width="1"/><rect x="2.2" y="2.4" width="1.8" height="2.4" fill="#1aa81a"/><rect x="5" y="2.4" width="5.8" height="2.4" fill="#3ed03a" stroke="#1aa81a" stroke-width=".5"/><rect x="2.2" y="6.6" width="4.4" height="2.6" fill="#3a80e0" stroke="#1a5ac0" stroke-width=".5"/><rect x="8.2" y="6.6" width="2.6" height="2.6" fill="#3a80e0" stroke="#1a5ac0" stroke-width=".5"/><rect x="2.2" y="10.8" width="2.4" height="2.4" fill="#b81010"/><rect x="6" y="10.8" width="4.8" height="2.4" fill="#e82a2a" stroke="#b81010" stroke-width=".5"/></svg></div>
<div class="a" style="left:851px;top:56px;line-height:0"><svg width="14" height="12" viewBox="0 0 14 12"><path d="M0 .5 L14 .5 M0 2.5 L14 2.5 M0 4.5 L14 4.5 M0 6.5 L14 6.5 M0 8.5 L14 8.5 M0 10.5 L9 10.5" stroke="#2a2e36" stroke-width="1" shape-rendering="crispEdges"/></svg></div>
<div class="a" style="left:872px;top:54px;line-height:0"><svg width="16" height="16" viewBox="0 0 16 16"><g transform="rotate(-18 8 8)"><path d="M3 4 L6 4 C5.2 2.6 5.6 0.8 7.6 0.8 C9.6 0.8 10 2.6 9.2 4 L12.4 4 L12.4 6.8 C13.8 6 15.6 6.4 15.6 8.2 C15.6 10 13.8 10.4 12.4 9.6 L12.4 12.8 L9.4 12.8 C10.2 14.2 9.6 15.8 7.8 15.8 C6 15.8 5.4 14.2 6.2 12.8 L3 12.8 L3 9.8 C1.8 10.6 0.2 10 0.2 8.4 C0.2 6.8 1.8 6.2 3 7 Z" fill="#2f74dc" stroke="#143c98" stroke-width=".9"/></g></svg></div>
<div class="a" style="left:894px;top:54px;line-height:0"><svg width="16" height="16" viewBox="0 0 16 16"><rect x=".6" y="1.2" width="14.6" height="14" fill="#eef4fb" stroke="#3a6ab8" stroke-width="1.1"/><rect x="2.6" y="2.6" width="9" height="1.8" fill="#e01818"/><rect x="2.6" y="5.4" width="6" height="1.4" fill="#e01818"/><rect x="6" y="7.4" width="7.4" height="1.6" fill="#2a6ad8"/><rect x="5" y="13" width="8.6" height=".9" fill="#3a6ab8"/><path d="M15.6 0.4 L16 1.6 L8.4 10 L6.6 8.6 Z" fill="#d81a1a" stroke="#9a0a0a" stroke-width=".4"/><path d="M6.4 8.4 L8.6 10.2 L7.4 11.6 L5.2 9.8 Z" fill="#9aa4b4"/><path d="M5.2 9.8 L7.4 11.6 C6.6 13.6 3.4 13.6 0.6 15.4 C1.4 12.8 2.6 10.6 5.2 9.8 Z" fill="#e8b84a" stroke="#b8861a" stroke-width=".5"/></svg></div>
<div class="a" style="left:922px;top:54px;line-height:0"><svg width="16" height="16" viewBox="0 0 16 16"><path d="M6.6 0.6 L9.4 0.6 L9.8 2.6 L11.2 3.2 L12.9 2.1 L14.9 4.1 L13.8 5.8 L14.4 7.2 L16.4 7.6 L16.4 10.4 L14.4 10.8 L13.8 12.2 L14.9 13.9 L12.9 15.9 L11.2 14.8 L9.8 15.4 L9.4 17.4 L6.6 17.4 L6.2 15.4 L4.8 14.8 L3.1 15.9 L1.1 13.9 L2.2 12.2 L1.6 10.8 L-0.4 10.4 L-0.4 7.6 L1.6 7.2 L2.2 5.8 L1.1 4.1 L3.1 2.1 L4.8 3.2 L6.2 2.6 Z" transform="translate(.4 -.1) scale(.95 .9)" fill="#e4e7ec" stroke="#6f7c92" stroke-width="1.1"/><circle cx="8" cy="8" r="2.2" fill="#cfd6e5" stroke="#6f7c92" stroke-width="1.1"/></svg></div>
<svg class="a" style="left:837px;top:60px" width="5" height="3" fill="#1f3a6e" shape-rendering="crispEdges"><rect x="0" y="0" width="5" height="1"/><rect x="1" y="1" width="3" height="1"/><rect x="2" y="2" width="1" height="1"/></svg>
<svg class="a" style="left:943px;top:66px" width="7" height="4" fill="#333" shape-rendering="crispEdges"><rect x="0" y="0" width="7" height="1"/><rect x="1" y="1" width="5" height="1"/><rect x="2" y="2" width="3" height="1"/><rect x="3" y="3" width="1" height="1"/></svg>
<div class="a " style="left:1px;top:76px;width:1918px;height:24px;background:#cfd6e5"></div>
<svg class="a" style="left:10px;top:80px" width="5" height="18" fill="#5f6f8c" shape-rendering="crispEdges"><rect x="0" y="0" width="1" height="1"/><rect x="4" y="0" width="1" height="1"/><rect x="2" y="2" width="1" height="1"/><rect x="0" y="4" width="1" height="1"/><rect x="4" y="4" width="1" height="1"/><rect x="2" y="6" width="1" height="1"/><rect x="0" y="8" width="1" height="1"/><rect x="4" y="8" width="1" height="1"/><rect x="2" y="10" width="1" height="1"/><rect x="0" y="12" width="1" height="1"/><rect x="4" y="12" width="1" height="1"/><rect x="2" y="14" width="1" height="1"/><rect x="0" y="16" width="1" height="1"/><rect x="4" y="16" width="1" height="1"/></svg>
<div class="a " style="left:33px;top:78px;width:1818px;height:20px;background:#f3f0c5;border:1px solid;border-color:#808080 #fff #fff #808080;box-shadow:inset 1px 1px 0 #404040, inset -1px -1px 0 #d4d0c8"></div>
<div class="a ui" style="left:39px;top:81px;font-size:11px;letter-spacing:0;color:#000;transform:scaleX(0.9994);transform-origin:0 0;">Diff 4: Change 1 line (160, first file) to 1 line (160, second file)</div>
<div class="a btn" style="left:1833px;top:80px;width:16px;height:16px;"></div>
<svg class="a" style="left:1837px;top:86px" width="7" height="4" fill="#000" shape-rendering="crispEdges"><rect x="0" y="0" width="7" height="1"/><rect x="1" y="1" width="5" height="1"/><rect x="2" y="2" width="3" height="1"/><rect x="3" y="3" width="1" height="1"/></svg>
<div class="a " style="left:1862px;top:81px;width:13px;height:13px;background:#c0c0c0;border:1px solid;border-color:#808080 #fff #fff #808080;box-shadow:inset 1px 1px 0 #404040"></div>
<div class="a " style="left:1875px;top:81px;width:32px;height:13px;background:#d4d0c8"></div>
<div class="a ui" style="left:1879px;top:81px;font-size:11px;letter-spacing:0;color:#000;transform:scaleX(0.8645);transform-origin:0 0;">Skip</div>
<svg class="a" style="left:1909px;top:92px" width="7" height="4" fill="#404040" shape-rendering="crispEdges"><rect x="0" y="0" width="7" height="1"/><rect x="1" y="1" width="5" height="1"/><rect x="2" y="2" width="3" height="1"/><rect x="3" y="3" width="1" height="1"/></svg>
<div class="a " style="left:0px;top:101px;width:951px;height:26px;background:#d4d0c8;border:1px solid;border-color:#808080 #fff #fff #808080;box-shadow:inset 1px 1px 0 #000, inset -1px -1px 0 #d4d0c8"></div>
<div class="a " style="left:2px;top:126px;width:948px;height:1px;background:#ebe8e0"></div>
<div class="a " style="left:3px;top:104px;width:878px;height:21px;background:#0a246a"></div>
<div class="a ui" style="left:9px;top:108px;font-size:11px;letter-spacing:0;color:#fff;transform:scaleX(0.9938);transform-origin:0 0;">C:\Program Files\Python\Python37\Lib\site-packages\saspy\sascfg_sav.py</div>
<div class="a" style="left:892px;top:106px;line-height:0"><svg width="16" height="16" viewBox="0 0 16 16"><rect x="4.6" y=".6" width="6.4" height="6" fill="#f2f7fd" stroke="#6f9ad8" stroke-width=".9"/><path d="M6 2.6 L9.6 2.6 M6 4.2 L9.6 4.2" stroke="#6f9ad8" stroke-width=".8"/><path d="M0.8 4.6 L4.4 4.6 L5.4 6 L13.6 6 L13.6 15.2 L0.8 15.2 Z" fill="#e9b93a" stroke="#c79a1c" stroke-width=".8"/><path d="M2 8.2 L15.4 8.2 L13.6 15.2 L0.8 15.2 Z" fill="#fbe46a" stroke="#c79a1c" stroke-width=".7"/></svg></div>
<svg class="a" style="left:916px;top:114px" width="5" height="3" fill="#000" shape-rendering="crispEdges"><rect x="0" y="0" width="5" height="1"/><rect x="1" y="1" width="3" height="1"/><rect x="2" y="2" width="1" height="1"/></svg>
<div class="a" style="left:928px;top:106px;line-height:0"><svg width="16" height="16" viewBox="0 0 16 16"><path d="M3.2 0.5 C4.2 0.6 4.8 1.4 5.3 2.6" stroke="#201000" stroke-width="1.1" fill="none"/><circle cx="4.6" cy="6.2" r="4.5" fill="url(#gr)"/><circle cx="10.4" cy="10.8" r="5.1" fill="url(#gy)"/><path d="M8.2 3.6 C9.6 3 10.8 3.8 11.2 5.2 C11.4 6.2 11 7 10.6 7.4 C9 7 8 5.6 8.2 3.6 Z" fill="#25a81f" stroke="#157a12" stroke-width=".5"/><path d="M10.8 7.2 C10.6 5 12.4 3.2 15.6 3.2 C15.4 5.6 13.6 7.2 10.8 7.2 Z" fill="#62e044" stroke="#1f9a18" stroke-width=".5"/></svg></div>
<div class="a " style="left:0px;top:127px;width:951px;height:924px;background:#d4d0c8;border:1px solid;border-color:#808080 #fff #fff #808080;box-shadow:inset 1px 1px 0 #000, inset -1px -1px 0 #d4d0c8"></div>
<div class="a " style="left:14px;top:129px;width:1px;height:920px;background:#808080"></div>
<div class="a " style="left:15px;top:129px;width:1px;height:920px;background:#000"></div>
<div class="a " style="left:16px;top:129px;width:29px;height:904px;background:#f8f8f8"></div>
<div class="a " style="left:45px;top:129px;width:880px;height:904px;background:#c0c0c0;overflow:hidden"><div class="row mono" style="top:13px;left:5px"><span class="cm"># build out a local classpath variable to use below for Linux clients</span></div><div class="row mono" style="top:26px;left:5px">cpL  =  <span class="st">&quot;/opt/sasinside/SASHome/SASDeploymentManager/9.4/products/deploywiz__94400__prt__xx__sp0__1/deploywiz,</span></div><div class="row mono" style="top:39px;left:5px">cpL += <span class="st">&quot;:/opt/sasinside/SASHome/SASDeploymentManager/9.4/products/deploywiz__94400__prt__xx__sp0__1/deploywiz,</span></div><div class="row mono" style="top:52px;left:5px">cpL += <span class="st">&quot;:/opt/sasinside/SASHome/SASDeploymentManager/9.4/products/deploywiz__94400__prt__xx__sp0__1/deploywiz,</span></div><div class="row mono" style="top:65px;left:5px">cpL += <span class="st">&quot;:/opt/sasinside/SASHome/SASDeploymentManager/9.4/products/deploywiz__94400__prt__xx__sp0__1/deploywiz,</span></div><div class="row mono" style="top:78px;left:5px">cpL += <span class="st">&quot;:/opt/github/saspy/java/saspyiom.jar&quot;</span></div><div class="row mono" style="top:104px;left:5px">iomlinux = {<span class="st">&#x27;java&#x27;</span>      : <span class="st">&#x27;/usr/bin/java&#x27;</span>,</div><div class="row mono" style="top:117px;left:5px">            <span class="st">&#x27;iomhost&#x27;</span>   : <span class="st">&#x27;linux.iom.host&#x27;</span>,</div><div class="row mono" style="top:130px;left:5px">            <span class="st">&#x27;iomport&#x27;</span>   : 8591,</div><div class="row mono" style="top:143px;left:5px">            <span class="st">&#x27;encoding&#x27;</span>  : <span class="st">&#x27;latin1&#x27;</span>,</div><div class="row mono" style="top:156px;left:5px">            <span class="st">&#x27;classpath&#x27;</span> : cpL</div><div class="row mono" style="top:169px;left:5px">            }</div><div class="row mono" style="top:195px;left:5px">iomwin   = {<span class="st">&#x27;java&#x27;</span>      : <span class="st">&#x27;/usr/bin/java&#x27;</span>,</div><div class="row mono" style="top:208px;left:5px">            <span class="st">&#x27;iomhost&#x27;</span>   : <span class="st">&#x27;windows.iom.host&#x27;</span>,</div><div class="row mono" style="top:221px;left:5px">            <span class="st">&#x27;iomport&#x27;</span>   : 8591,</div><div class="row mono" style="top:234px;left:5px">            <span class="st">&#x27;encoding&#x27;</span>  : <span class="st">&#x27;windows-1252&#x27;</span>,</div><div class="row mono" style="top:247px;left:5px">            <span class="st">&#x27;classpath&#x27;</span> : cpL</div><div class="row mono" style="top:260px;left:5px">            }</div><div class="row mono" style="top:299px;left:5px"><span class="cm"># build out a local classpath variable to use below for Windows clients</span></div><div class="row ch mono" style="top:312px;left:5px">cpW  =  &quot;C:\\Program Files\\SASHome\\SASDeploymentManager\\9.4\\products\\<span class="c">deploywiz__94472__prt__xx__sp0__1</span>\\deploywiz.jar</div><div class="row ch mono" style="top:325px;left:5px">cpW += &quot;;C:\\Program Files\\SASHome\\SASDeploymentManager\\9.4\\products\\<span class="c">deploywiz__94472__prt__xx__sp0__1</span>\\deploywiz.jar</div><div class="row ch mono" style="top:338px;left:5px">cpW += &quot;;C:\\Program Files\\SASHome\\SASDeploymentManager\\9.4\\products\\<span class="c">deploywiz__94472__prt__xx__sp0__1</span>\\deploywiz.jar</div><div class="row ch mono" style="top:351px;left:5px">cpW += &quot;;C:\\Program Files\\SASHome\\SASDeploymentManager\\9.4\\products\\<span class="c">deploywiz__94472__prt__xx__sp0__1</span>\\deploywiz.jar</div><div class="row ch mono" style="top:364px;left:5px">cpW += &quot;;C:\\<span class="c">ProgramData</span>\\<span class="c">Anaconda3</span>\\Lib\\site-packages\\saspy\\java\\saspyiom.jar&quot;</div><div class="row mono" style="top:390px;left:5px"><span class="cm"># And, if you&#x27;ve configured IOM to use Encryption, you need these client side jars.</span></div><div class="row mono" style="top:403px;left:5px"><span class="cm">#cpW += &quot;;C:\\Program Files\\SASHome\\SASVersionedJarRepository\\eclipse\\plugins\\sas.rutil_904300.0.0.20150204190000_v940m3</span></div><div class="row mono" style="top:416px;left:5px"><span class="cm">#cpW += &quot;;C:\\Program Files\\SASHome\\SASVersionedJarRepository\\eclipse\\plugins\\sas.rutil.nls_904300.0.0.20150204190000_v940m3</span></div><div class="row mono" style="top:429px;left:5px"><span class="cm">#cpW += &quot;;C:\\Program Files\\SASHome\\SASVersionedJarRepository\\eclipse\\plugins\\sastpj.rutil_6.1.0.0_SAS_20121211183517</span></div><div class="row ch mono" style="top:468px;left:5px">winlocal = {&#x27;java&#x27;      : &#x27;java&#x27;,</div><div class="row mono" style="top:481px;left:5px">            <span class="st">&#x27;encoding&#x27;</span>  : <span class="st">&#x27;windows-1252&#x27;</span>,</div><div class="row mono" style="top:494px;left:5px">            <span class="st">&#x27;classpath&#x27;</span> : cpW</div><div class="row mono" style="top:507px;left:5px">            }</div><div class="row mono" style="top:533px;left:5px">winiomlinux = {<span class="st">&#x27;java&#x27;</span>   : <span class="st">&#x27;java&#x27;</span>,</div><div class="row mono" style="top:546px;left:5px">            <span class="st">&#x27;iomhost&#x27;</span>   : <span class="st">&#x27;linux.iom.host&#x27;</span>,</div><div class="row mono" style="top:559px;left:5px">            <span class="st">&#x27;iomport&#x27;</span>   : 8591,</div><div class="row mono" style="top:572px;left:5px">            <span class="st">&#x27;encoding&#x27;</span>  : <span class="st">&#x27;latin1&#x27;</span>,</div><div class="row mono" style="top:585px;left:5px">            <span class="st">&#x27;classpath&#x27;</span> : cpW</div><div class="row mono" style="top:598px;left:5px">            }</div><div class="row mono" style="top:624px;left:5px">winiomwin  = {<span class="st">&#x27;java&#x27;</span>    : <span class="st">&#x27;java&#x27;</span>,</div><div class="row mono" style="top:637px;left:5px">            <span class="st">&#x27;iomhost&#x27;</span>   : <span class="st">&#x27;windows.iom.host&#x27;</span>,</div><div class="row mono" style="top:650px;left:5px">            <span class="st">&#x27;iomport&#x27;</span>   : 8591,</div><div class="row mono" style="top:663px;left:5px">            <span class="st">&#x27;encoding&#x27;</span>  : <span class="st">&#x27;windows-1252&#x27;</span>,</div><div class="row mono" style="top:676px;left:5px">            <span class="st">&#x27;classpath&#x27;</span> : cpW</div><div class="row mono" style="top:689px;left:5px">            }</div><div class="row mono" style="top:715px;left:5px">winiomIWA  = {<span class="st">&#x27;java&#x27;</span>    : <span class="st">&#x27;java&#x27;</span>,</div><div class="row mono" style="top:728px;left:5px">            <span class="st">&#x27;iomhost&#x27;</span>   : <span class="st">&#x27;windows.iom.host&#x27;</span>,</div><div class="row mono" style="top:741px;left:5px">            <span class="st">&#x27;iomport&#x27;</span>   : 8591,</div><div class="row mono" style="top:754px;left:5px">            <span class="st">&#x27;encoding&#x27;</span>  : <span class="st">&#x27;windows-1252&#x27;</span>,</div><div class="row mono" style="top:767px;left:5px">            <span class="st">&#x27;classpath&#x27;</span> : cpW,</div><div class="row mono" style="top:780px;left:5px">            <span class="st">&#x27;sspi&#x27;</span>      : <span class="kw">True</span></div><div class="row mono" style="top:793px;left:5px">            }</div><div class="a" style="left:5px;top:442px;width:2000px;height:2px;background:repeating-linear-gradient(90deg,#e8c830 0 3px,transparent 3px 6px)"></div><div class="a" style="left:5px;top:455px;width:2000px;height:2px;background:repeating-linear-gradient(90deg,#e8c830 0 3px,transparent 3px 6px)"></div></div>
<div class="a mono" style="left:17px;top:129px;width:28px;height:904px;overflow:hidden"><div class="ln" style="top:0px">124</div><div class="ln" style="top:13px">125</div><div class="ln" style="top:26px">126</div><div class="ln" style="top:39px">127</div><div class="ln" style="top:52px">128</div><div class="ln" style="top:65px">129</div><div class="ln" style="top:78px">130</div><div class="ln" style="top:91px">131</div><div class="ln" style="top:104px">132</div><div class="ln" style="top:117px">133</div><div class="ln" style="top:130px">134</div><div class="ln" style="top:143px">135</div><div class="ln" style="top:156px">136</div><div class="ln" style="top:169px">137</div><div class="ln" style="top:182px">138</div><div class="ln" style="top:195px">139</div><div class="ln" style="top:208px">140</div><div class="ln" style="top:221px">141</div><div class="ln" style="top:234px">142</div><div class="ln" style="top:247px">143</div><div class="ln" style="top:260px">144</div><div class="ln" style="top:273px">145</div><div class="ln" style="top:286px">146</div><div class="ln" style="top:299px">147</div><div class="ln" style="top:312px">148</div><div class="ln" style="top:325px">149</div><div class="ln" style="top:338px">150</div><div class="ln" style="top:351px">151</div><div class="ln" style="top:364px">152</div><div class="ln" style="top:377px">153</div><div class="ln" style="top:390px">154</div><div class="ln" style="top:403px">155</div><div class="ln" style="top:416px">156</div><div class="ln" style="top:429px">157</div><div class="ln" style="top:442px;color:#000080">158</div><div class="ln" style="top:455px">159</div><div class="ln" style="top:468px">160</div><div class="ln" style="top:481px">161</div><div class="ln" style="top:494px">162</div><div class="ln" style="top:507px">163</div><div class="ln" style="top:520px">164</div><div class="ln" style="top:533px">165</div><div class="ln" style="top:546px">166</div><div class="ln" style="top:559px">167</div><div class="ln" style="top:572px">168</div><div class="ln" style="top:585px">169</div><div class="ln" style="top:598px">170</div><div class="ln" style="top:611px">171</div><div class="ln" style="top:624px">172</div><div class="ln" style="top:637px">173</div><div class="ln" style="top:650px">174</div><div class="ln" style="top:663px">175</div><div class="ln" style="top:676px">176</div><div class="ln" style="top:689px">177</div><div class="ln" style="top:702px">178</div><div class="ln" style="top:715px">179</div><div class="ln" style="top:728px">180</div><div class="ln" style="top:741px">181</div><div class="ln" style="top:754px">182</div><div class="ln" style="top:767px">183</div><div class="ln" style="top:780px">184</div><div class="ln" style="top:793px">185</div><div class="ln" style="top:806px">186</div><div class="ln" style="top:819px">187</div></div>
<div class="a " style="left:2px;top:441px;width:12px;height:66px;background:#b8b2aa;border-top:1px solid #808080;border-bottom:1px solid #505050"></div>
<div class="a " style="left:2px;top:597px;width:12px;height:14px;background:#ffff00;border-top:2px solid #ffa500;border-bottom:2px solid #ffa500"></div>
<div class="a" style="left:3px;top:442px;line-height:0"><svg width="10" height="10" viewBox="0 0 11 11"><path d="M0.8 3.6 L5.4 3.6 L5.4 0.9 L10.3 5.5 L5.4 10.1 L5.4 7.4 L0.8 7.4 Z" fill="url(#gar)" stroke="#167a12" stroke-width="1"/></svg></div>
<div class="a" style="left:3px;top:598px;line-height:0"><svg width="10" height="10" viewBox="0 0 11 11"><path d="M0.8 3.6 L5.4 3.6 L5.4 0.9 L10.3 5.5 L5.4 10.1 L5.4 7.4 L0.8 7.4 Z" fill="url(#gar)" stroke="#167a12" stroke-width="1"/></svg></div>
<div class="a chk" style="left:925px;top:129px;width:16px;height:904px;"></div>
<div class="a btn" style="left:925px;top:129px;width:16px;height:16px;"></div>
<svg class="a" style="left:929px;top:135px" width="7" height="4" fill="#000" shape-rendering="crispEdges"><rect x="0" y="3" width="7" height="1"/><rect x="1" y="2" width="5" height="1"/><rect x="2" y="1" width="3" height="1"/><rect x="3" y="0" width="1" height="1"/></svg>
<div class="a btn" style="left:925px;top:1017px;width:16px;height:16px;"></div>
<svg class="a" style="left:929px;top:1023px" width="7" height="4" fill="#000" shape-rendering="crispEdges"><rect x="0" y="0" width="7" height="1"/><rect x="1" y="1" width="5" height="1"/><rect x="2" y="2" width="3" height="1"/><rect x="3" y="3" width="1" height="1"/></svg>
<div class="a btn" style="left:925px;top:719px;width:16px;height:298px;"></div>
<div class="a chk" style="left:16px;top:1033px;width:909px;height:16px;"></div>
<div class="a btn" style="left:16px;top:1033px;width:16px;height:16px;"></div>
<svg class="a" style="left:21px;top:1037px" width="4" height="7" fill="#000" shape-rendering="crispEdges"><rect x="3" y="0" width="1" height="7"/><rect x="2" y="1" width="1" height="5"/><rect x="1" y="2" width="1" height="3"/><rect x="0" y="3" width="1" height="1"/></svg>
<div class="a btn" style="left:909px;top:1033px;width:16px;height:16px;"></div>
<svg class="a" style="left:915px;top:1037px" width="4" height="7" fill="#000" shape-rendering="crispEdges"><rect x="0" y="0" width="1" height="7"/><rect x="1" y="1" width="1" height="5"/><rect x="2" y="2" width="1" height="3"/><rect x="3" y="3" width="1" height="1"/></svg>
<div class="a btn" style="left:32px;top:1033px;width:609px;height:16px;"></div>
<div class="a " style="left:925px;top:1033px;width:16px;height:16px;background:#d4d0c8"></div>
<div class="a " style="left:941px;top:129px;width:1px;height:920px;background:#808080"></div>
<div class="a " style="left:942px;top:129px;width:1px;height:920px;background:#000"></div>
<div class="a " style="left:943px;top:129px;width:7px;height:920px;background:#d4d0c8"></div>
<div class="a " style="left:945px;top:145px;width:4px;height:872px;background:#c0c0c0"></div>
<div class="a " style="left:945px;top:303px;width:4px;height:5px;background:#402000"></div>
<div class="a " style="left:945px;top:532px;width:4px;height:5px;background:#402000"></div>
<div class="a " style="left:945px;top:830px;width:4px;height:23px;background:#402000"></div>
<div class="a " style="left:945px;top:886px;width:4px;height:5px;background:#402000"></div>
<div class="a " style="left:0px;top:1051px;width:951px;height:22px;background:#d4d0c8;border:1px solid;border-color:#000 #fff #fff #808080;box-shadow:inset 1px 0 0 #000"></div>
<div class="cell" style="left:2px;width:568px;"></div>
<div class="a ui" style="left:3px;top:1056px;font-size:11px;letter-spacing:0;color:#000;transform:scaleX(0.9475);transform-origin:0 0;">Ln 158, Col 1</div>
<div class="cell" style="left:571px;width:70px;"></div>
<div class="a ui" style="left:573px;top:1056px;font-size:11px;letter-spacing:0;color:#000;transform:scaleX(0.9243);transform-origin:0 0;">186 lines</div>
<div class="cell" style="left:643px;width:27px;"></div>
<div class="a ui" style="left:644.3px;top:1056px;font-size:11px;letter-spacing:0;color:#000;transform:scaleX(0.8834);transform-origin:0 0;">INS</div>
<div class="cell" style="left:672px;width:55px;"></div>
<div class="a ui" style="left:673.3px;top:1056px;font-size:11px;letter-spacing:0;color:#808080;transform:scaleX(0.9613);transform-origin:0 0;text-shadow:1px 1px 0 #fff;">Read-only</div>
<div class="cell" style="left:729px;width:24px;"></div>
<div class="a ui" style="left:730.2px;top:1056px;font-size:11px;letter-spacing:0;color:#000;transform:scaleX(0.9285);transform-origin:0 0;">Edit</div>
<div class="cell" style="left:755px;width:38px;"></div>
<div class="a ui" style="left:756.5px;top:1056px;font-size:11px;letter-spacing:0;color:#808080;transform:scaleX(0.9170);transform-origin:0 0;text-shadow:1px 1px 0 #fff;">Plug-in</div>
<div class="cell" style="left:795px;width:38px;background:#c0dcc0;"></div>
<div class="a ui" style="left:796.5px;top:1056px;font-size:11px;letter-spacing:0;color:#ff0000;transform:scaleX(0.9294);transform-origin:0 0;">Older</div>
<div class="cell" style="left:834px;width:54px;"></div>
<div class="a ui" style="left:835.9px;top:1056px;font-size:11px;letter-spacing:0;color:#000;transform:scaleX(0.9198);transform-origin:0 0;">10.4 KB</div>
<div class="cell" style="left:890px;width:59px;"></div>
<div class="a ui" style="left:891.5px;top:1056px;font-size:11px;letter-spacing:0;color:#000;transform:scaleX(0.9153);transform-origin:0 0;">ANSI</div>
<div class="a " style="left:969px;top:101px;width:951px;height:26px;background:#d4d0c8;border:1px solid;border-color:#808080 #fff #fff #808080;box-shadow:inset 1px 1px 0 #000, inset -1px -1px 0 #d4d0c8"></div>
<div class="a " style="left:971px;top:126px;width:948px;height:1px;background:#ebe8e0"></div>
<div class="a ui" style="left:978px;top:108px;font-size:11px;letter-spacing:0;color:#000;transform:scaleX(0.9916);transform-origin:0 0;">C:\Program Files\Python\Python37\Lib\site-packages\saspy\sascfg.py</div>
<div class="a" style="left:1861px;top:106px;line-height:0"><svg width="16" height="16" viewBox="0 0 16 16"><rect x="4.6" y=".6" width="6.4" height="6" fill="#f2f7fd" stroke="#6f9ad8" stroke-width=".9"/><path d="M6 2.6 L9.6 2.6 M6 4.2 L9.6 4.2" stroke="#6f9ad8" stroke-width=".8"/><path d="M0.8 4.6 L4.4 4.6 L5.4 6 L13.6 6 L13.6 15.2 L0.8 15.2 Z" fill="#e9b93a" stroke="#c79a1c" stroke-width=".8"/><path d="M2 8.2 L15.4 8.2 L13.6 15.2 L0.8 15.2 Z" fill="#fbe46a" stroke="#c79a1c" stroke-width=".7"/></svg></div>
<svg class="a" style="left:1885px;top:114px" width="5" height="3" fill="#000" shape-rendering="crispEdges"><rect x="0" y="0" width="5" height="1"/><rect x="1" y="1" width="3" height="1"/><rect x="2" y="2" width="1" height="1"/></svg>
<div class="a" style="left:1897px;top:106px;line-height:0"><svg width="16" height="16" viewBox="0 0 16 16"><path d="M3.2 0.5 C4.2 0.6 4.8 1.4 5.3 2.6" stroke="#201000" stroke-width="1.1" fill="none"/><circle cx="4.6" cy="6.2" r="4.5" fill="url(#gr)"/><circle cx="10.4" cy="10.8" r="5.1" fill="url(#gy)"/><path d="M8.2 3.6 C9.6 3 10.8 3.8 11.2 5.2 C11.4 6.2 11 7 10.6 7.4 C9 7 8 5.6 8.2 3.6 Z" fill="#25a81f" stroke="#157a12" stroke-width=".5"/><path d="M10.8 7.2 C10.6 5 12.4 3.2 15.6 3.2 C15.4 5.6 13.6 7.2 10.8 7.2 Z" fill="#62e044" stroke="#1f9a18" stroke-width=".5"/></svg></div>
<div class="a " style="left:969px;top:127px;width:951px;height:924px;background:#d4d0c8;border:1px solid;border-color:#808080 #fff #fff #808080;box-shadow:inset 1px 1px 0 #000, inset -1px -1px 0 #d4d0c8"></div>
<div class="a " style="left:983px;top:129px;width:1px;height:920px;background:#808080"></div>
<div class="a " style="left:984px;top:129px;width:1px;height:920px;background:#000"></div>
<div class="a " style="left:985px;top:129px;width:29px;height:904px;background:#f8f8f8"></div>
<div class="a " style="left:1014px;top:129px;width:880px;height:904px;background:#c0c0c0;overflow:hidden"><div class="row mono" style="top:13px;left:5px"><span class="cm"># build out a local classpath variable to use below for Linux clients</span></div><div class="row mono" style="top:26px;left:5px">cpL  =  <span class="st">&quot;/opt/sasinside/SASHome/SASDeploymentManager/9.4/products/deploywiz__94400__prt__xx__sp0__1/deploywiz,</span></div><div class="row mono" style="top:39px;left:5px">cpL += <span class="st">&quot;:/opt/sasinside/SASHome/SASDeploymentManager/9.4/products/deploywiz__94400__prt__xx__sp0__1/deploywiz,</span></div><div class="row mono" style="top:52px;left:5px">cpL += <span class="st">&quot;:/opt/sasinside/SASHome/SASDeploymentManager/9.4/products/deploywiz__94400__prt__xx__sp0__1/deploywiz,</span></div><div class="row mono" style="top:65px;left:5px">cpL += <span class="st">&quot;:/opt/sasinside/SASHome/SASDeploymentManager/9.4/products/deploywiz__94400__prt__xx__sp0__1/deploywiz,</span></div><div class="row mono" style="top:78px;left:5px">cpL += <span class="st">&quot;:/opt/github/saspy/java/saspyiom.jar&quot;</span></div><div class="row mono" style="top:104px;left:5px">iomlinux = {<span class="st">&#x27;java&#x27;</span>      : <span class="st">&#x27;/usr/bin/java&#x27;</span>,</div><div class="row mono" style="top:117px;left:5px">            <span class="st">&#x27;iomhost&#x27;</span>   : <span class="st">&#x27;linux.iom.host&#x27;</span>,</div><div class="row mono" style="top:130px;left:5px">            <span class="st">&#x27;iomport&#x27;</span>   : 8591,</div><div class="row mono" style="top:143px;left:5px">            <span class="st">&#x27;encoding&#x27;</span>  : <span class="st">&#x27;latin1&#x27;</span>,</div><div class="row mono" style="top:156px;left:5px">            <span class="st">&#x27;classpath&#x27;</span> : cpL</div><div class="row mono" style="top:169px;left:5px">            }</div><div class="row mono" style="top:195px;left:5px">iomwin   = {<span class="st">&#x27;java&#x27;</span>      : <span class="st">&#x27;/usr/bin/java&#x27;</span>,</div><div class="row mono" style="top:208px;left:5px">            <span class="st">&#x27;iomhost&#x27;</span>   : <span class="st">&#x27;windows.iom.host&#x27;</span>,</div><div class="row mono" style="top:221px;left:5px">            <span class="st">&#x27;iomport&#x27;</span>   : 8591,</div><div class="row mono" style="top:234px;left:5px">            <span class="st">&#x27;encoding&#x27;</span>  : <span class="st">&#x27;windows-1252&#x27;</span>,</div><div class="row mono" style="top:247px;left:5px">            <span class="st">&#x27;classpath&#x27;</span> : cpL</div><div class="row mono" style="top:260px;left:5px">            }</div><div class="row mono" style="top:299px;left:5px"><span class="cm"># build out a local classpath variable to use below for Windows clients</span></div><div class="row ch mono" style="top:312px;left:5px">cpW  =  &quot;C:\\Program Files\\SASHome\\SASDeploymentManager\\9.4\\products\\<span class="c">deploywiz__94420__prt__xx__sp0__1</span>\\deploywiz.jar</div><div class="row ch mono" style="top:325px;left:5px">cpW += &quot;;C:\\Program Files\\SASHome\\SASDeploymentManager\\9.4\\products\\<span class="c">deploywiz__94420__prt__xx__sp0__1</span>\\deploywiz.jar</div><div class="row ch mono" style="top:338px;left:5px">cpW += &quot;;C:\\Program Files\\SASHome\\SASDeploymentManager\\9.4\\products\\<span class="c">deploywiz__94420__prt__xx__sp0__1</span>\\deploywiz.jar</div><div class="row ch mono" style="top:351px;left:5px">cpW += &quot;;C:\\Program Files\\SASHome\\SASDeploymentManager\\9.4\\products\\<span class="c">deploywiz__94420__prt__xx__sp0__1</span>\\deploywiz.jar</div><div class="row ch mono" style="top:364px;left:5px">cpW += &quot;;C:\\<span class="c">Program</span> <span class="ad">Files</span>\\<span class="c">Python\\Python37</span>\\Lib\\site-packages\\saspy\\java\\saspyiom.jar&quot;</div><div class="row mono" style="top:390px;left:5px"><span class="cm"># And, if you&#x27;ve configured IOM to use Encryption, you need these client side jars.</span></div><div class="row mono" style="top:403px;left:5px"><span class="cm">#cpW += &quot;;C:\\Program Files\\SASHome\\SASVersionedJarRepository\\eclipse\\plugins\\sas.rutil_904300.0.0.20150204190000_v940m3</span></div><div class="row mono" style="top:416px;left:5px"><span class="cm">#cpW += &quot;;C:\\Program Files\\SASHome\\SASVersionedJarRepository\\eclipse\\plugins\\sas.rutil.nls_904300.0.0.20150204190000_v940m3</span></div><div class="row mono" style="top:429px;left:5px"><span class="cm">#cpW += &quot;;C:\\Program Files\\SASHome\\SASVersionedJarRepository\\eclipse\\plugins\\sastpj.rutil_6.1.0.0_SAS_20121211183517</span></div><div class="row ch mono" style="top:468px;left:5px">winlocal = {&#x27;java&#x27;      : &#x27;<span class="ad">C:\\Program Files\\SASHome\\SASPrivateJavaRuntimeEnvironment\\9.4\\jre\\bin\\</span>java&#x27;</div><div class="row mono" style="top:481px;left:5px">            <span class="st">&#x27;encoding&#x27;</span>  : <span class="st">&#x27;windows-1252&#x27;</span>,</div><div class="row mono" style="top:494px;left:5px">            <span class="st">&#x27;classpath&#x27;</span> : cpW</div><div class="row mono" style="top:507px;left:5px">            }</div><div class="row mono" style="top:533px;left:5px">winiomlinux = {<span class="st">&#x27;java&#x27;</span>   : <span class="st">&#x27;java&#x27;</span>,</div><div class="row mono" style="top:546px;left:5px">            <span class="st">&#x27;iomhost&#x27;</span>   : <span class="st">&#x27;linux.iom.host&#x27;</span>,</div><div class="row mono" style="top:559px;left:5px">            <span class="st">&#x27;iomport&#x27;</span>   : 8591,</div><div class="row mono" style="top:572px;left:5px">            <span class="st">&#x27;encoding&#x27;</span>  : <span class="st">&#x27;latin1&#x27;</span>,</div><div class="row mono" style="top:585px;left:5px">            <span class="st">&#x27;classpath&#x27;</span> : cpW</div><div class="row mono" style="top:598px;left:5px">            }</div><div class="row mono" style="top:624px;left:5px">winiomwin  = {<span class="st">&#x27;java&#x27;</span>    : <span class="st">&#x27;java&#x27;</span>,</div><div class="row mono" style="top:637px;left:5px">            <span class="st">&#x27;iomhost&#x27;</span>   : <span class="st">&#x27;windows.iom.host&#x27;</span>,</div><div class="row mono" style="top:650px;left:5px">            <span class="st">&#x27;iomport&#x27;</span>   : 8591,</div><div class="row mono" style="top:663px;left:5px">            <span class="st">&#x27;encoding&#x27;</span>  : <span class="st">&#x27;windows-1252&#x27;</span>,</div><div class="row mono" style="top:676px;left:5px">            <span class="st">&#x27;classpath&#x27;</span> : cpW</div><div class="row mono" style="top:689px;left:5px">            }</div><div class="row mono" style="top:715px;left:5px">winiomIWA  = {<span class="st">&#x27;java&#x27;</span>    : <span class="st">&#x27;java&#x27;</span>,</div><div class="row mono" style="top:728px;left:5px">            <span class="st">&#x27;iomhost&#x27;</span>   : <span class="st">&#x27;windows.iom.host&#x27;</span>,</div><div class="row mono" style="top:741px;left:5px">            <span class="st">&#x27;iomport&#x27;</span>   : 8591,</div><div class="row mono" style="top:754px;left:5px">            <span class="st">&#x27;encoding&#x27;</span>  : <span class="st">&#x27;windows-1252&#x27;</span>,</div><div class="row mono" style="top:767px;left:5px">            <span class="st">&#x27;classpath&#x27;</span> : cpW,</div><div class="row mono" style="top:780px;left:5px">            <span class="st">&#x27;sspi&#x27;</span>      : <span class="kw">True</span></div><div class="row mono" style="top:793px;left:5px">            }</div></div>
<div class="a mono" style="left:986px;top:129px;width:28px;height:904px;overflow:hidden"><div class="ln" style="top:0px">124</div><div class="ln" style="top:13px">125</div><div class="ln" style="top:26px">126</div><div class="ln" style="top:39px">127</div><div class="ln" style="top:52px">128</div><div class="ln" style="top:65px">129</div><div class="ln" style="top:78px">130</div><div class="ln" style="top:91px">131</div><div class="ln" style="top:104px">132</div><div class="ln" style="top:117px">133</div><div class="ln" style="top:130px">134</div><div class="ln" style="top:143px">135</div><div class="ln" style="top:156px">136</div><div class="ln" style="top:169px">137</div><div class="ln" style="top:182px">138</div><div class="ln" style="top:195px">139</div><div class="ln" style="top:208px">140</div><div class="ln" style="top:221px">141</div><div class="ln" style="top:234px">142</div><div class="ln" style="top:247px">143</div><div class="ln" style="top:260px">144</div><div class="ln" style="top:273px">145</div><div class="ln" style="top:286px">146</div><div class="ln" style="top:299px">147</div><div class="ln" style="top:312px">148</div><div class="ln" style="top:325px">149</div><div class="ln" style="top:338px">150</div><div class="ln" style="top:351px">151</div><div class="ln" style="top:364px">152</div><div class="ln" style="top:377px">153</div><div class="ln" style="top:390px">154</div><div class="ln" style="top:403px">155</div><div class="ln" style="top:416px">156</div><div class="ln" style="top:429px">157</div><div class="ln" style="top:442px">158</div><div class="ln" style="top:455px">159</div><div class="ln" style="top:468px">160</div><div class="ln" style="top:481px">161</div><div class="ln" style="top:494px">162</div><div class="ln" style="top:507px">163</div><div class="ln" style="top:520px">164</div><div class="ln" style="top:533px">165</div><div class="ln" style="top:546px">166</div><div class="ln" style="top:559px">167</div><div class="ln" style="top:572px">168</div><div class="ln" style="top:585px">169</div><div class="ln" style="top:598px">170</div><div class="ln" style="top:611px">171</div><div class="ln" style="top:624px">172</div><div class="ln" style="top:637px">173</div><div class="ln" style="top:650px">174</div><div class="ln" style="top:663px">175</div><div class="ln" style="top:676px">176</div><div class="ln" style="top:689px">177</div><div class="ln" style="top:702px">178</div><div class="ln" style="top:715px">179</div><div class="ln" style="top:728px">180</div><div class="ln" style="top:741px">181</div><div class="ln" style="top:754px">182</div><div class="ln" style="top:767px">183</div><div class="ln" style="top:780px">184</div><div class="ln" style="top:793px">185</div><div class="ln" style="top:806px">186</div><div class="ln" style="top:819px">187</div></div>
<div class="a " style="left:971px;top:441px;width:12px;height:66px;background:#b8b2aa;border-top:1px solid #808080;border-bottom:1px solid #505050"></div>
<div class="a " style="left:971px;top:597px;width:12px;height:14px;background:#ffff00;border-top:2px solid #ffa500;border-bottom:2px solid #ffa500"></div>
<div class="a" style="left:972px;top:442px;line-height:0"><svg width="10" height="10" viewBox="0 0 11 11"><path d="M10.2 3.6 L5.6 3.6 L5.6 0.9 L0.7 5.5 L5.6 10.1 L5.6 7.4 L10.2 7.4 Z" fill="url(#gal)" stroke="#167a12" stroke-width="1"/></svg></div>
<div class="a" style="left:972px;top:598px;line-height:0"><svg width="10" height="10" viewBox="0 0 11 11"><path d="M10.2 3.6 L5.6 3.6 L5.6 0.9 L0.7 5.5 L5.6 10.1 L5.6 7.4 L10.2 7.4 Z" fill="url(#gal)" stroke="#167a12" stroke-width="1"/></svg></div>
<div class="a chk" style="left:1894px;top:129px;width:16px;height:904px;"></div>
<div class="a btn" style="left:1894px;top:129px;width:16px;height:16px;"></div>
<svg class="a" style="left:1898px;top:135px" width="7" height="4" fill="#000" shape-rendering="crispEdges"><rect x="0" y="3" width="7" height="1"/><rect x="1" y="2" width="5" height="1"/><rect x="2" y="1" width="3" height="1"/><rect x="3" y="0" width="1" height="1"/></svg>
<div class="a btn" style="left:1894px;top:1017px;width:16px;height:16px;"></div>
<svg class="a" style="left:1898px;top:1023px" width="7" height="4" fill="#000" shape-rendering="crispEdges"><rect x="0" y="0" width="7" height="1"/><rect x="1" y="1" width="5" height="1"/><rect x="2" y="2" width="3" height="1"/><rect x="3" y="3" width="1" height="1"/></svg>
<div class="a btn" style="left:1894px;top:719px;width:16px;height:298px;"></div>
<div class="a chk" style="left:985px;top:1033px;width:909px;height:16px;"></div>
<div class="a btn" style="left:985px;top:1033px;width:16px;height:16px;"></div>
<svg class="a" style="left:990px;top:1037px" width="4" height="7" fill="#000" shape-rendering="crispEdges"><rect x="3" y="0" width="1" height="7"/><rect x="2" y="1" width="1" height="5"/><rect x="1" y="2" width="1" height="3"/><rect x="0" y="3" width="1" height="1"/></svg>
<div class="a btn" style="left:1878px;top:1033px;width:16px;height:16px;"></div>
<svg class="a" style="left:1884px;top:1037px" width="4" height="7" fill="#000" shape-rendering="crispEdges"><rect x="0" y="0" width="1" height="7"/><rect x="1" y="1" width="1" height="5"/><rect x="2" y="2" width="1" height="3"/><rect x="3" y="3" width="1" height="1"/></svg>
<div class="a btn" style="left:1001px;top:1033px;width:609px;height:16px;"></div>
<div class="a " style="left:1894px;top:1033px;width:16px;height:16px;background:#d4d0c8"></div>
<div class="a " style="left:1910px;top:129px;width:1px;height:920px;background:#808080"></div>
<div class="a " style="left:1911px;top:129px;width:1px;height:920px;background:#000"></div>
<div class="a " style="left:1912px;top:129px;width:7px;height:920px;background:#d4d0c8"></div>
<div class="a " style="left:1914px;top:145px;width:4px;height:872px;background:#c0c0c0"></div>
<div class="a " style="left:1914px;top:303px;width:4px;height:5px;background:#402000"></div>
<div class="a " style="left:1914px;top:532px;width:4px;height:5px;background:#402000"></div>
<div class="a " style="left:1914px;top:830px;width:4px;height:23px;background:#402000"></div>
<div class="a " style="left:1914px;top:886px;width:4px;height:5px;background:#402000"></div>
<div class="a " style="left:969px;top:1051px;width:951px;height:22px;background:#d4d0c8;border:1px solid;border-color:#000 #fff #fff #808080;box-shadow:inset 1px 0 0 #000"></div>
<div class="cell" style="left:971px;width:568px;"></div>
<div class="a ui" style="left:972px;top:1056px;font-size:11px;letter-spacing:0;color:#000;transform:scaleX(0.9424);transform-origin:0 0;">Ln 35, Col 1</div>
<div class="cell" style="left:1540px;width:70px;"></div>
<div class="a ui" style="left:1542px;top:1056px;font-size:11px;letter-spacing:0;color:#000;transform:scaleX(0.9243);transform-origin:0 0;">186 lines</div>
<div class="cell" style="left:1612px;width:27px;"></div>
<div class="a ui" style="left:1613.3px;top:1056px;font-size:11px;letter-spacing:0;color:#000;transform:scaleX(0.8834);transform-origin:0 0;">INS</div>
<div class="cell" style="left:1641px;width:55px;"></div>
<div class="a ui" style="left:1642.3px;top:1056px;font-size:11px;letter-spacing:0;color:#808080;transform:scaleX(0.9613);transform-origin:0 0;text-shadow:1px 1px 0 #fff;">Read-only</div>
<div class="cell" style="left:1698px;width:24px;"></div>
<div class="a ui" style="left:1699.2px;top:1056px;font-size:11px;letter-spacing:0;color:#000;transform:scaleX(0.9285);transform-origin:0 0;">Edit</div>
<div class="cell" style="left:1724px;width:38px;"></div>
<div class="a ui" style="left:1725.5px;top:1056px;font-size:11px;letter-spacing:0;color:#808080;transform:scaleX(0.9170);transform-origin:0 0;text-shadow:1px 1px 0 #fff;">Plug-in</div>
<div class="cell" style="left:1764px;width:38px;background:#a6caf0;"></div>
<div class="a ui" style="left:1765.5px;top:1056px;font-size:11px;letter-spacing:0;color:#800080;transform:scaleX(0.9595);transform-origin:0 0;">Newer</div>
<div class="cell" style="left:1803px;width:54px;"></div>
<div class="a ui" style="left:1804.9px;top:1056px;font-size:11px;letter-spacing:0;color:#000;transform:scaleX(0.9198);transform-origin:0 0;">10.4 KB</div>
<div class="cell" style="left:1859px;width:59px;"></div>
<div class="a ui" style="left:1860.5px;top:1056px;font-size:11px;letter-spacing:0;color:#000;transform:scaleX(0.9153);transform-origin:0 0;">ANSI</div>
<div class="a " style="left:951px;top:101px;width:18px;height:972px;background:#d4d0c8"></div>
<div class="a " style="left:951px;top:127px;width:6px;height:909px;background:#c4bfb8"></div>
<div class="a " style="left:963px;top:127px;width:6px;height:909px;background:#c4bfb8"></div>
<div class="a " style="left:0px;top:1073px;width:1920px;height:1px;background:#808080"></div>
<div class="a " style="left:0px;top:1074px;width:1920px;height:1px;background:#000"></div>
<div class="a " style="left:0px;top:1075px;width:1920px;height:14px;background:#c0c0c0"></div>
<div class="a " style="left:0px;top:1074px;width:1px;height:15px;background:#808080"></div>
<div class="a " style="left:1px;top:1074px;width:1px;height:15px;background:#000"></div>
<div class="a " style="left:2px;top:1075px;width:12px;height:14px;background:#d4d0c8"></div>
<div class="a " style="left:14px;top:1074px;width:1px;height:15px;background:#808080"></div>
<div class="a " style="left:15px;top:1074px;width:1px;height:15px;background:#000"></div>
<div class="a " style="left:16px;top:1075px;width:29px;height:14px;background:#f8f8f8"></div>
<div class="a mono" style="left:17px;top:1076px;color:#808080">158</div>
<div class="a" style="left:3px;top:1076px;line-height:0"><svg width="10" height="10" viewBox="0 0 11 11"><path d="M0.8 3.6 L5.4 3.6 L5.4 0.9 L10.3 5.5 L5.4 10.1 L5.4 7.4 L0.8 7.4 Z" fill="url(#gar)" stroke="#167a12" stroke-width="1"/></svg></div>
<div class="a " style="left:0px;top:1089px;width:1920px;height:1px;background:#808080"></div>
<div class="a " style="left:0px;top:1090px;width:1920px;height:1px;background:#000"></div>
<div class="a " style="left:0px;top:1091px;width:1920px;height:14px;background:#c0c0c0"></div>
<div class="a " style="left:0px;top:1090px;width:1px;height:15px;background:#808080"></div>
<div class="a " style="left:1px;top:1090px;width:1px;height:15px;background:#000"></div>
<div class="a " style="left:2px;top:1091px;width:12px;height:14px;background:#d4d0c8"></div>
<div class="a " style="left:14px;top:1090px;width:1px;height:15px;background:#808080"></div>
<div class="a " style="left:15px;top:1090px;width:1px;height:15px;background:#000"></div>
<div class="a " style="left:16px;top:1091px;width:29px;height:14px;background:#f8f8f8"></div>
<div class="a mono" style="left:17px;top:1092px;color:#808080">158</div>
<div class="a" style="left:3px;top:1092px;line-height:0"><svg width="10" height="10" viewBox="0 0 11 11"><path d="M10.2 3.6 L5.6 3.6 L5.6 0.9 L0.7 5.5 L5.6 10.1 L5.6 7.4 L10.2 7.4 Z" fill="url(#gal)" stroke="#167a12" stroke-width="1"/></svg></div>
<div class="a " style="left:0px;top:1105px;width:1920px;height:1px;background:#fff"></div>
<div class="a chk" style="left:0px;top:1106px;width:1920px;height:17px;"></div>
<div class="a btn" style="left:0px;top:1106px;width:16px;height:17px;"></div>
<svg class="a" style="left:5px;top:1111px" width="4" height="7" fill="#808080" shape-rendering="crispEdges"><rect x="3" y="0" width="1" height="7"/><rect x="2" y="1" width="1" height="5"/><rect x="1" y="2" width="1" height="3"/><rect x="0" y="3" width="1" height="1"/></svg>
<div class="a btn" style="left:1904px;top:1106px;width:16px;height:17px;"></div>
<svg class="a" style="left:1910px;top:1111px" width="4" height="7" fill="#808080" shape-rendering="crispEdges"><rect x="0" y="0" width="1" height="7"/><rect x="1" y="1" width="1" height="5"/><rect x="2" y="2" width="1" height="3"/><rect x="3" y="3" width="1" height="1"/></svg>
<div class="a " style="left:0px;top:1123px;width:1920px;height:29px;background:#293955"></div>
<div class="a " style="left:0px;top:1146px;width:79px;height:6px;background:#415980"></div>
<div class="a ui" style="left:6.5px;top:1128px;font-size:11px;letter-spacing:0;color:#fff;transform:scaleX(0.9795);transform-origin:0 0;">Output Pane</div>
<div class="a " style="left:0px;top:1152px;width:1920px;height:20px;background:#68217a"></div>
<div class="a ui" style="left:2.5px;top:1156px;font-size:11px;letter-spacing:0;color:#fff;transform:scaleX(0.9791);transform-origin:0 0;">4 differences: 8 lines, 13 inline differences in 8 changed lines</div>
<div class="a" style="left:1555px;top:1155px;width:60px;height:16px;background:#c0c0c0"></div>
<div class="a ui" style="left:1556.5px;top:1156px;font-size:11px;letter-spacing:0;color:#800000;transform:scaleX(1.0013);transform-origin:0 0;">Added(0,3)</div>
<div class="a" style="left:1619px;top:1155px;width:66px;height:16px;background:#e0e0e0"></div>
<div class="a ui" style="left:1620px;top:1156px;font-size:11px;letter-spacing:0;color:#0000ff;transform:scaleX(1.0077);transform-origin:0 0;">Deleted(0,2)</div>
<div class="a" style="left:1689px;top:1155px;width:62px;height:16px;background:#f3f0c5"></div>
<div class="a ui" style="left:1690.25px;top:1156px;font-size:11px;letter-spacing:0;color:#000;transform:scaleX(0.9768);transform-origin:0 0;">Changed(8)</div>
<div class="a" style="left:1755px;top:1155px;width:117px;height:16px;background:#c6e2ff"></div>
<div class="a ui" style="left:1756.5px;top:1156px;font-size:11px;letter-spacing:0;color:#ff0080;transform:scaleX(0.9698);transform-origin:0 0;">Changed in changed(8)</div>
<div class="a" style="left:1876px;top:1155px;width:43px;height:16px;background:#ffffff"></div>
<div class="a ui" style="left:1877px;top:1156px;font-size:11px;letter-spacing:0;color:#008000;transform:scaleX(1.0051);transform-origin:0 0;">Ignored</div>
<div class="a " style="left:0px;top:1172px;width:1920px;height:1px;background:#fff"></div>
<div class="a " style="left:0px;top:1173px;width:1920px;height:3px;background:#d4d0c8"></div>
</body></html>
